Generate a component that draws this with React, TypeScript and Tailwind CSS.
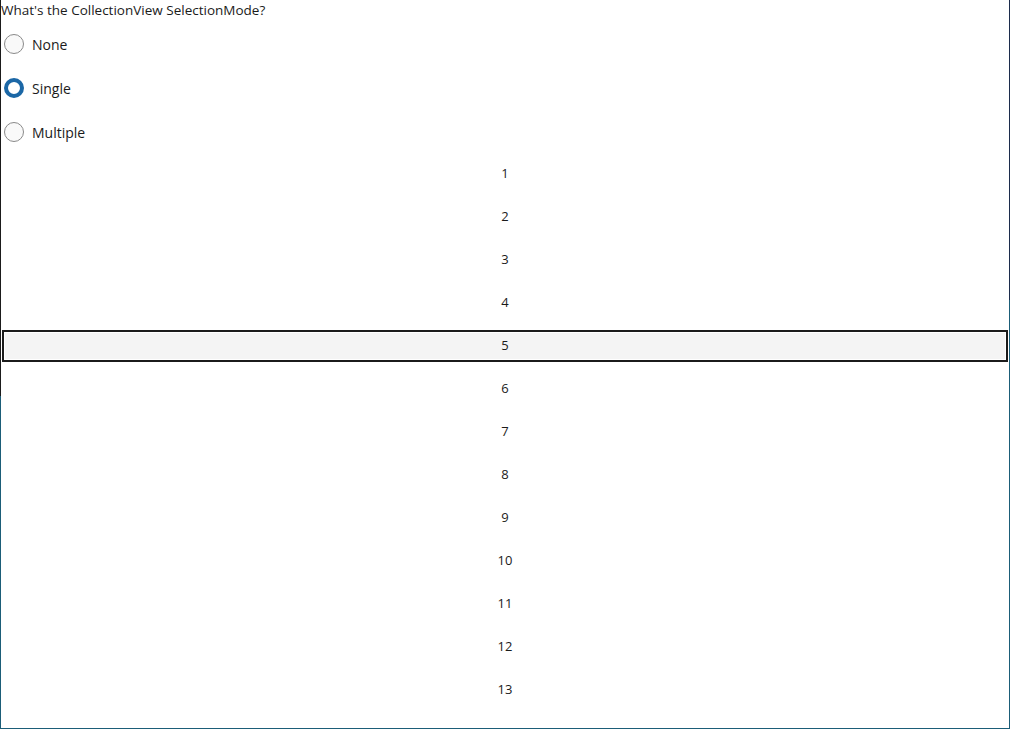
import React from "react";

const font = { fontFamily: '"Open Sans", "Noto Sans", sans-serif' };

function Radio({ label, checked }: { label: string; checked?: boolean }) {
  return (
    <div className="flex h-[44px] shrink-0 items-center">
      <div className="ml-[4px] flex h-[20px] w-[20px] items-center justify-center">
        {checked ? (
          <div className="h-[20px] w-[20px] rounded-full border-[4px] border-[#1b67a6] bg-white" />
        ) : (
          <div className="h-[20px] w-[20px] rounded-full border border-[#8a8a8a] bg-[#f9f9f9]" />
        )}
      </div>
      <span className="ml-[8px] text-[14px] text-[#1b1b1b]">{label}</span>
    </div>
  );
}

export default function App() {
  const items = Array.from({ length: 14 }, (_, i) => i + 1);
  return (
    <div className="relative h-[729px] w-[1010px] overflow-hidden bg-white" style={font}>
      <div className="flex h-[729px] flex-col">
        <div className="h-[22px] shrink-0 pl-px text-[13.5px] leading-[20px] text-[#1b1b1b]">
          What's the CollectionView SelectionMode?
        </div>
        <Radio label="None" />
        <Radio label="Single" checked />
        <Radio label="Multiple" />
        <div className="flex shrink-0 flex-col">
          {items.map((n) => (
            <div key={n} className="relative h-[43px] shrink-0">
              {n === 5 && (
                <div className="absolute left-[2px] right-[2px] top-[4px] h-[32px] border-2 border-[#1b1b1b]">
                  <div className="h-full w-full border border-white bg-[#f4f4f4]" />
                </div>
              )}
              <div className="relative flex h-[39px] items-center justify-center text-[13px] text-[#1b1b1b]">
                {n}
              </div>
            </div>
          ))}
        </div>
      </div>
      <div className="absolute left-0 top-0 h-[729px] w-px bg-[linear-gradient(to_bottom,#1b1b1b_396px,#1b5d78_396px)]" />
      <div className="absolute right-0 top-0 h-[729px] w-px bg-[linear-gradient(to_bottom,#1c2c4c_300px,#1b5d78_300px)]" />
      <div className="absolute bottom-0 left-0 h-px w-[1010px] bg-[#1b5d78]" />
    </div>
  );
}
